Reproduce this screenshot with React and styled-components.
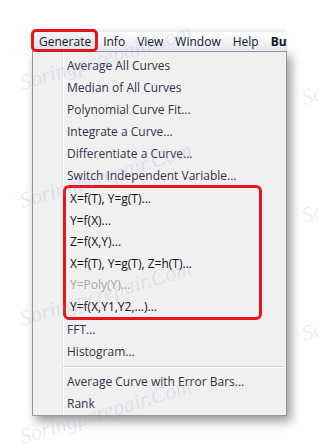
import React from "react";
import styled, { createGlobalStyle, css } from "styled-components";

const GlobalStyle = createGlobalStyle`
  html, body {
    margin: 0;
    padding: 0;
    background: #fff;
  }
  body {
    font-family: "Open Sans", "Noto Sans", sans-serif;
    font-size: 12px;
  }
`;

const Page = styled.div`
  position: relative;
  width: 319px;
  height: 448px;
  overflow: hidden;
  padding: 32px 0 0 32px;
  box-sizing: border-box;
`;

const Frame = styled.div`
  width: 255px;
`;

const MenuBar = styled.div`
  display: flex;
  height: 19px;
  padding-left: 1px;
  background: linear-gradient(#ffffff, #e2e7f0);
  box-shadow: 0 -2px 5px rgba(0, 0, 0, 0.1);
  white-space: nowrap;
  clip-path: inset(-6px 0 -6px -6px);
`;

const BarItem = styled.div`
  position: relative;
  display: flex;
  align-items: center;
  padding: 0 6px;
  color: #161626;
  font-weight: ${(p) => (p.$bold ? 700 : 400)};
  ${(p) =>
    p.$open &&
    css`
      background: linear-gradient(#f1f3f6, #dde2ea);
      &::after {
        content: "";
        position: absolute;
        inset: -3px -1px -1px -2px;
        border: 3px solid #e8141b;
        border-radius: 5px;
      }
    `}
`;

const Dropdown = styled.div`
  border: 1px solid #979797;
  background: linear-gradient(
      to right,
      transparent 29px,
      #e2e3e3 29px,
      #e2e3e3 30px,
      #ffffff 30px,
      #ffffff 31px,
      transparent 31px
    ),
    #f0f0f0;
  padding: 2px 0 1px;
  box-shadow: 4px 5px 10px rgba(0, 0, 0, 0.42);
`;

const Item = styled.div`
  display: flex;
  align-items: center;
  height: 22px;
  padding-left: 34px;
  white-space: nowrap;
  color: ${(p) => (p.$disabled ? "#a6a6a6" : "#35304a")};
`;

const Group = styled.div`
  width: 199px;
  box-sizing: border-box;
  margin: -1px 0 -2px 30px;
  border: 3px solid #e8141b;
  border-radius: 6px;

  ${Item} {
    height: 21.5px;
    padding-left: 4px;
    font-weight: 500;
    color: #111111;
  }
  ${Item}[data-disabled="true"] {
    color: #a6a6a6;
    font-weight: 400;
  }
`;

const Separator = styled.div`
  margin: 4px 2px 2px 30px;
  border-top: 1px solid #d7d7d7;
  border-bottom: 1px solid #ffffff;
`;

const Watermark = styled.span`
  position: absolute;
  left: ${(p) => p.$x}px;
  top: ${(p) => p.$y}px;
  transform: rotate(-17deg);
  transform-origin: 0 100%;
  font: italic 22px "Liberation Serif", serif;
  color: rgba(140, 160, 215, 0.2);
  pointer-events: none;
  white-space: nowrap;
`;

const topItems = [
  "Average All Curves",
  "Median of All Curves",
  "Polynomial Curve Fit...",
  "Integrate a Curve...",
  "Differentiate a Curve...",
  "Switch Independent Variable...",
];

const functionItems = [
  { label: "X=f(T), Y=g(T)..." },
  { label: "Y=f(X)..." },
  { label: "Z=f(X,Y)..." },
  { label: "X=f(T), Y=g(T), Z=h(T)..." },
  { label: "Y=Poly(Y)...", disabled: true },
  { label: "Y=f(X,Y1,Y2,...)..." },
];

const marks = [
  [24, -48], [24, 70], [24, 188], [24, 306], [24, 424],
  [306, 85], [306, 203], [306, 321],
];

export default function App() {
  return (
    <Page>
      <GlobalStyle />
      <Frame>
        <MenuBar>
          <BarItem $open>Generate</BarItem>
          <BarItem>Info</BarItem>
          <BarItem>View</BarItem>
          <BarItem>Window</BarItem>
          <BarItem>Help</BarItem>
          <BarItem $bold>Buy</BarItem>
        </MenuBar>
        <Dropdown>
          {topItems.map((label) => (
            <Item key={label}>{label}</Item>
          ))}
          <Group>
            {functionItems.map((it) => (
              <Item key={it.label} data-disabled={it.disabled ? "true" : "false"}>
                {it.label}
              </Item>
            ))}
          </Group>
          <Item>FFT...</Item>
          <Item>Histogram...</Item>
          <Separator />
          <Item>Average Curve with Error Bars...</Item>
          <Item>Rank</Item>
        </Dropdown>
      </Frame>
      {marks.map(([x, y]) => (
        <Watermark key={`${x}-${y}`} $x={x} $y={y}>
          Soringpcrepair.Com
        </Watermark>
      ))}
    </Page>
  );
}
